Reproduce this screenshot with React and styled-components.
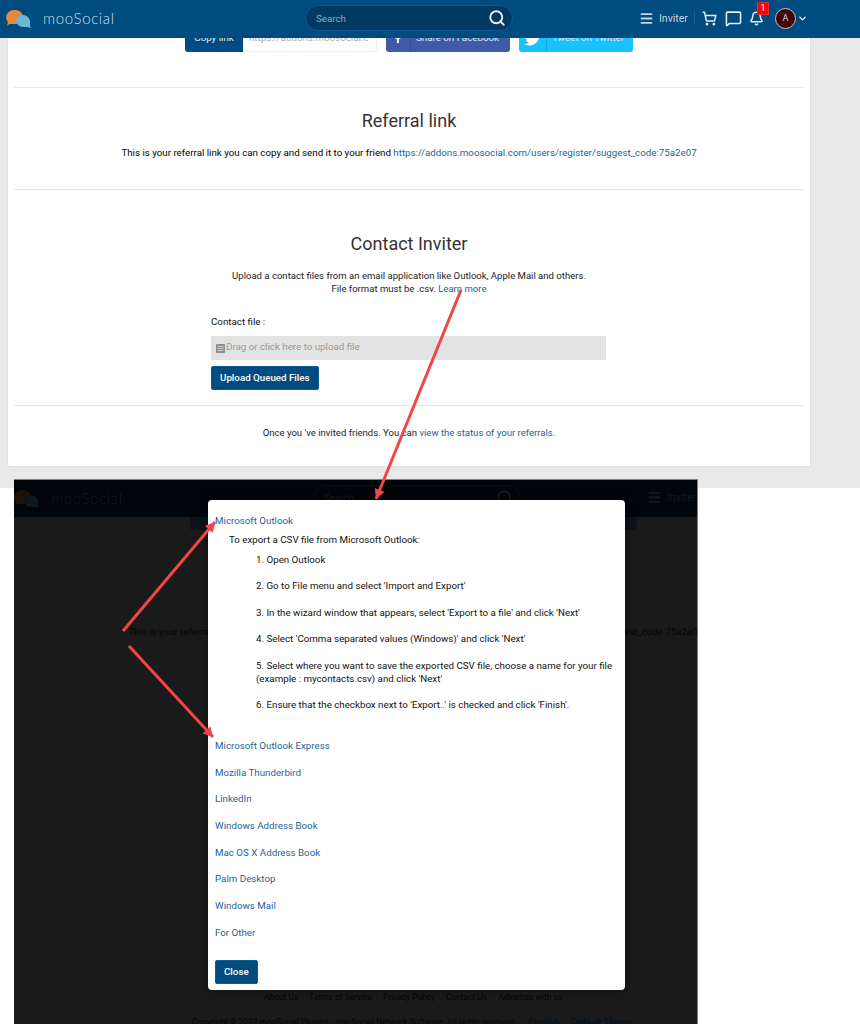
import styled, { createGlobalStyle } from "styled-components";
import { Menu, Search, ShoppingCart, MessageSquare, Bell, ChevronDown } from "lucide-react";
import { FaFacebookF, FaTwitter } from "react-icons/fa";

const Global = createGlobalStyle`
    html, body {
        margin: 0;
        padding: 0;
        background: #fff;
        font-family: Roboto, "Liberation Sans", sans-serif;
        font-size: 9.75px;
        color: #111;
    }
    * { box-sizing: border-box; }
`;

const Page = styled.div`
    position: relative;
    width: 860px;
    height: 1024px;
    overflow: hidden;
`;

const TopShot = styled.section`
    height: 488px;
    background: #e9e9e9;
`;

const Header = styled.header`
    position: relative;
    z-index: 2;
    height: ${(p) => (p.$dim ? 37 : 38)}px;
    display: flex;
    align-items: center;
    padding: 0 0 2px ${(p) => (p.$dim ? 0 : 6)}px;
    background: ${(p) => (p.$dim ? "#00050a" : "#004b80")};
    color: ${(p) => (p.$dim ? "#171a1d" : "#fff")};
`;

const LogoText = styled.span`
    width: 71px;
    margin-left: 11px;
    font-family: Lato, sans-serif;
    font-weight: 300;
    font-size: 15px;
    letter-spacing: 0.65px;
    color: ${(p) => (p.$dim ? "#171a1d" : "#cfdde8")};
`;

const SearchBox = styled.div`
    width: 208px;
    height: 26px;
    margin-left: 191px;
    padding: 0 6px 0 10px;
    display: flex;
    align-items: center;
    justify-content: space-between;
    border-radius: 13px;
    border: 1px solid ${(p) => (p.$dim ? "#0a0e12" : "#0f5a90")};
    background: ${(p) => (p.$dim ? "transparent" : "#003a63")};
    font-size: 9.75px;
    color: ${(p) => (p.$dim ? "#171a1d" : "#94a9b9")};
    svg { color: ${(p) => (p.$dim ? "#171a1d" : "#e6eef4")}; }
`;

const NavRight = styled.nav`
    display: flex;
    align-items: center;
    margin-left: 126px;
    color: #e6eef4;
`;

const InviterLink = styled.span`
    display: flex;
    align-items: center;
    gap: 5px;
    font-size: 10.5px;
    color: #c3d3df;
    width: 56px;
    height: 14px;
    margin-right: 7px;
    border-right: 1px solid #1a6298;
`;

const DimInviter = styled.span`
    display: flex;
    align-items: center;
    gap: 5px;
    margin-left: 126px;
    font-size: 10.5px;
    color: #171a1d;
`;

const NavIcon = styled.span`
    position: relative;
    display: flex;
    margin-right: ${(p) => p.$mr}px;
`;

const Badge = styled.span`
    position: absolute;
    top: -9px;
    left: 8px;
    width: 12px;
    height: 13px;
    background: #f00;
    border: 1px solid #c33;
    color: #fff;
    font-size: 9px;
    line-height: 11px;
    text-align: center;
`;

const Avatar = styled.span`
    width: 21px;
    height: 21px;
    margin-right: 1px;
    border-radius: 50%;
    border: 1px solid #c9c3c3;
    background: #400505;
    color: #ddd;
    font-size: 9px;
    line-height: 19px;
    text-align: center;
`;

const Card = styled.main`
    display: flow-root;
    width: 804px;
    height: 429px;
    margin-left: 7px;
    padding: 0 6px;
    background: #fff;
    border: 1px solid #e2e2e2;
    border-top: 0;
    border-radius: 0 0 3px 3px;
    text-align: center;
`;

const ShareRow = styled.div`
    height: 28px;
    margin: -14px 0 35px;
    display: flex;
    justify-content: center;
    gap: 9px;
`;

const CopyGroup = styled.div`
    display: flex;
    height: 28px;
`;

const CopyButton = styled.span`
    width: 58px;
    line-height: 28px;
    background: #004b80;
    color: #e8eef4;
    border-radius: 3px 0 0 3px;
`;

const CopyInput = styled.span`
    width: 134px;
    padding-left: 5px;
    line-height: 26px;
    border: 1px solid #eee;
    border-radius: 0 3px 3px 0;
    color: #aaa;
    text-align: left;
    overflow: hidden;
    white-space: nowrap;
`;

const ShareButton = styled.span`
    height: 28px;
    width: ${(p) => p.$w}px;
    display: flex;
    border-radius: 3px;
    background: ${(p) => p.$bg};
    color: #dfe8f5;
`;

const ShareIcon = styled.span`
    width: ${(p) => p.$w}px;
    display: flex;
    align-items: center;
    justify-content: center;
    flex: none;
    border-right: 1px solid rgba(0, 0, 0, 0.12);
    color: #fff;
`;

const ShareLabel = styled.span`
    padding-left: 5px;
    line-height: 28px;
    white-space: nowrap;
`;

const Rule = styled.hr`
    margin: 0;
    border: 0;
    border-top: 1px solid #e6e6e6;
`;

const Block = styled.div`
    height: ${(p) => p.$h}px;
    padding-top: ${(p) => p.$pt}px;
`;

const Title = styled.h2`
    margin: 0;
    font-weight: 400;
    font-size: 18px;
    line-height: 24px;
    color: #333;
`;

const Text = styled.p`
    margin: ${(p) => p.$mt}px 0 0;
    font-size: ${(p) => p.$size || 9.55}px;
    line-height: 13px;
    color: #222;
`;

const BlackText = styled(Text)`
    line-height: 14px;
    color: #000;
`;

const A = styled.a`
    color: #1f5f93;
`;

const Form = styled.div`
    width: 395px;
    margin: 20px 0 0 197px;
    text-align: left;
`;

const Label = styled.div`
    line-height: 14px;
    color: #111;
`;

const DropZone = styled.div`
    height: 24px;
    margin-top: 7px;
    display: flex;
    align-items: center;
    padding-left: 5px;
    gap: 1px;
    background: #e3e3e3;
    color: #999;
`;

const DropHint = styled.span`
    margin-bottom: 4px;
`;

const Btn = styled.span`
    display: inline-block;
    height: 24px;
    line-height: 22px;
    padding: 0 8px;
    background: #004b80;
    border: 1px solid #0d5a90;
    border-radius: 2px;
    color: #fff;
    font-weight: 500;
`;

const UploadBtn = styled(Btn)`
    margin-top: 6px;
`;

const LowerShot = styled.section`
    position: relative;
    width: 684px;
    height: 545px;
    margin: -9px 0 0 14px;
    background: #1a1a1a;
    border-top: 1px solid #808080;
    border-right: 1px solid #808080;
    overflow: hidden;
`;

const DimButton = styled.div`
    width: 447px;
    height: 13px;
    margin-left: 176px;
    background: #0a1318;
    border-radius: 0 0 3px 3px;
`;

const DimLine = styled.div`
    margin: 95px 0 0 114px;
    white-space: nowrap;
    line-height: 14px;
    color: #050505;
`;

const DimFooter = styled.div`
    display: flex;
    gap: 4.5px;
    margin: 351px 0 0 250px;
    font-size: 8.4px;
    line-height: 14px;
    color: #050505;
    white-space: nowrap;
`;

const DimCopyright = styled.div`
    display: flex;
    align-items: center;
    margin: 12px 0 0 178px;
    font-size: 8.4px;
    white-space: nowrap;
    color: #050505;
`;

const DimLang = styled.span`
    margin-left: 12px;
    font-size: 9.5px;
    color: #02101a;
`;

const Modal = styled.div`
    position: absolute;
    z-index: 3;
    left: 194px;
    top: 20px;
    width: 417px;
    height: 490px;
    padding: 14px 7px 0;
    background: #fff;
    border-radius: 4px;
    box-shadow: 0 0 10px rgba(0, 0, 0, 0.4);
    line-height: 13px;
    color: #111;
`;

const HelpLink = styled.div`
    height: 13px;
    margin-top: ${(p) => p.$mt ?? 13.7}px;
    color: #1f5f93;
`;

const HelpIntro = styled.div`
    margin: 5.5px 0 0 14px;
`;

const Steps = styled.ol`
    margin: 7px 0 0;
    padding: 0 0 0 41px;
    list-style: none;
`;

const Step = styled.li`
    margin-top: 13.6px;
    &:first-child { margin-top: 0; }
`;

const CloseBtn = styled(Btn)`
    margin-top: 21px;
`;

const Arrows = styled.svg`
    position: absolute;
    left: 0;
    top: 0;
    z-index: 3;
    pointer-events: none;
`;

const LogoMark = ({ dim }) => (
    <svg width="26" height="20" viewBox="0 0 26 20">
        <path d="M0 10a8 8 0 0 1 8-8h2a7.500 7.500 0 0 1 7 8 7.500 7.500 0 0 1-7 6H4l-3 1.500 1-3.500a8 8 0 0 1-2-4z" fill={dim ? "#1c1206" : "#e8883a"} />
        <path d="M10 13a7 7 0 0 1 7-6 7 7 0 0 1 7 6v5l1 2-4-1h-4a7 7 0 0 1-7-6z" fill={dim ? "#0b1a20" : "#6bb7d8"} />
    </svg>
);

const FileIcon = () => (
    <svg width="9" height="9" viewBox="0 0 9 9">
        <rect width="9" height="9" rx="1" fill="#8a8a8a" />
        <path d="M1.500 2.500h6M1.500 4.500h6M1.500 6.500h6" stroke="#e3e3e3" strokeWidth="0.8" />
    </svg>
);

const Arrow = ({ x1, y1, x2, y2 }) => {
    const a = Math.atan2(y2 - y1, x2 - x1);
    const s = 11;
    const p1 = `${x2 - s * Math.cos(a - 0.5)},${y2 - s * Math.sin(a - 0.5)}`;
    const p2 = `${x2 - s * Math.cos(a + 0.5)},${y2 - s * Math.sin(a + 0.5)}`;
    return (
        <>
            <line x1={x1} y1={y1} x2={x2} y2={y2} stroke="#f44545" strokeWidth="3" />
            <polygon points={`${x2},${y2} ${p1} ${p2}`} fill="#f44545" />
        </>
    );
};

const steps = [
    ["1. Open Outlook"],
    ["2. Go to File menu and select 'Import and Export'"],
    ["3. In the wizard window that appears, select 'Export to a file' and click 'Next'"],
    ["4. Select 'Comma separated values (Windows)' and click 'Next'"],
    ["5. Select where you want to save the exported CSV file, choose a name for your file", "(example : mycontacts.csv) and click 'Next'"],
    ["6. Ensure that the checkbox next to 'Export..' is checked and click 'Finish'."],
];

const otherLinks = [
    "Mozilla Thunderbird",
    "LinkedIn",
    "Windows Address Book",
    "Mac OS X Address Book",
    "Palm Desktop",
    "Windows Mail",
    "For Other",
];

export default function App() {
    return (
        <Page>
            <Global />
            <TopShot>
                <Header>
                    <LogoMark />
                    <LogoText>mooSocial</LogoText>
                    <SearchBox>
                        Search
                        <Search size={18} strokeWidth={2.5} />
                    </SearchBox>
                    <NavRight>
                        <InviterLink>
                            <Menu size={15} strokeWidth={3} />
                            Inviter
                        </InviterLink>
                        <NavIcon $mr={8}><ShoppingCart size={15} strokeWidth={2.4} /></NavIcon>
                        <NavIcon $mr={7}><MessageSquare size={17} strokeWidth={2.2} /></NavIcon>
                        <NavIcon $mr={11}>
                            <Bell size={15} strokeWidth={2.4} />
                            <Badge>1</Badge>
                        </NavIcon>
                        <Avatar>A</Avatar>
                        <ChevronDown size={11} strokeWidth={3} />
                    </NavRight>
                </Header>
                <Card>
                    <ShareRow>
                        <CopyGroup>
                            <CopyButton>Copy link</CopyButton>
                            <CopyInput>https://addons.moosocial.c</CopyInput>
                        </CopyGroup>
                        <ShareButton $w={124} $bg="#3f5aa6">
                            <ShareIcon $w={25}><FaFacebookF size={10} /></ShareIcon>
                            <ShareLabel>Share on Facebook</ShareLabel>
                        </ShareButton>
                        <ShareButton $w={114} $bg="#19c2ff">
                            <ShareIcon $w={28}><FaTwitter size={17} /></ShareIcon>
                            <ShareLabel>Tweet on Twitter</ShareLabel>
                        </ShareButton>
                    </ShareRow>
                    <Rule />
                    <Block $h={101} $pt={21}>
                        <Title>Referral link</Title>
                        <BlackText $mt={13} $size={9.75}>
                            This is your referral link you can copy and send it to your friend{" "}
                            <A>https://addons.moosocial.com/users/register/suggest_code:75a2e07</A>
                        </BlackText>
                    </Block>
                    <Rule />
                    <Block $h={215} $pt={42}>
                        <Title>Contact Inviter</Title>
                        <Text $mt={13}>
                            Upload a contact files from an email application like Outlook, Apple Mail and others.
                            <br />
                            File format must be .csv. <A>Learn more</A>
                        </Text>
                        <Form>
                            <Label>Contact file :</Label>
                            <DropZone>
                                <FileIcon />
                                <DropHint>Drag or click here to upload file</DropHint>
                            </DropZone>
                            <UploadBtn>Upload Queued Files</UploadBtn>
                        </Form>
                    </Block>
                    <Rule />
                    <Text $mt={20}>
                        Once you 've invited friends. You can <A>view the status of your referrals.</A>
                    </Text>
                </Card>
            </TopShot>

            <LowerShot>
                <Header $dim>
                    <LogoMark dim />
                    <LogoText $dim>mooSocial</LogoText>
                    <SearchBox $dim>
                        Search
                        <Search size={18} strokeWidth={2.5} />
                    </SearchBox>
                    <DimInviter>
                        <Menu size={15} strokeWidth={3} />
                        Inviter
                    </DimInviter>
                </Header>
                <DimButton />
                <DimLine>
                    This is your referral link you can copy and send it to your friend https://addons.moosocial.com/users/register/suggest_code:75a2e07
                </DimLine>
                <DimFooter>
                    <span>About Us</span><span>.</span>
                    <span>Terms of Service</span><span>.</span>
                    <span>Privacy Policy</span><span>.</span>
                    <span>Contact Us</span><span>.</span>
                    <span>Advertise with us</span>
                </DimFooter>
                <DimCopyright>
                    <span>Copyright © 2022 mooSocial Plugins - php Social Network Software. All rights reserved.</span>
                    <DimLang>English</DimLang>
                    <DimLang>Default Theme</DimLang>
                </DimCopyright>
                <Modal>
                    <HelpLink $mt={0}>Microsoft Outlook</HelpLink>
                    <HelpIntro>To export a CSV file from Microsoft Outlook:</HelpIntro>
                    <Steps>
                        {steps.map((lines) => (
                            <Step key={lines[0]}>
                                {lines.map((line) => <div key={line}>{line}</div>)}
                            </Step>
                        ))}
                    </Steps>
                    <HelpLink $mt={27.5}>Microsoft Outlook Express</HelpLink>
                    {otherLinks.map((name) => <HelpLink key={name}>{name}</HelpLink>)}
                    <CloseBtn>Close</CloseBtn>
                </Modal>
            </LowerShot>

            <Arrows width="860" height="1024" viewBox="0 0 860 1024">
                <Arrow x1={461} y1={290} x2={376} y2={499} />
                <Arrow x1={123} y1={631} x2={215} y2={522} />
                <Arrow x1={129} y1={646} x2={213} y2={737} />
            </Arrows>
        </Page>
    );
}
